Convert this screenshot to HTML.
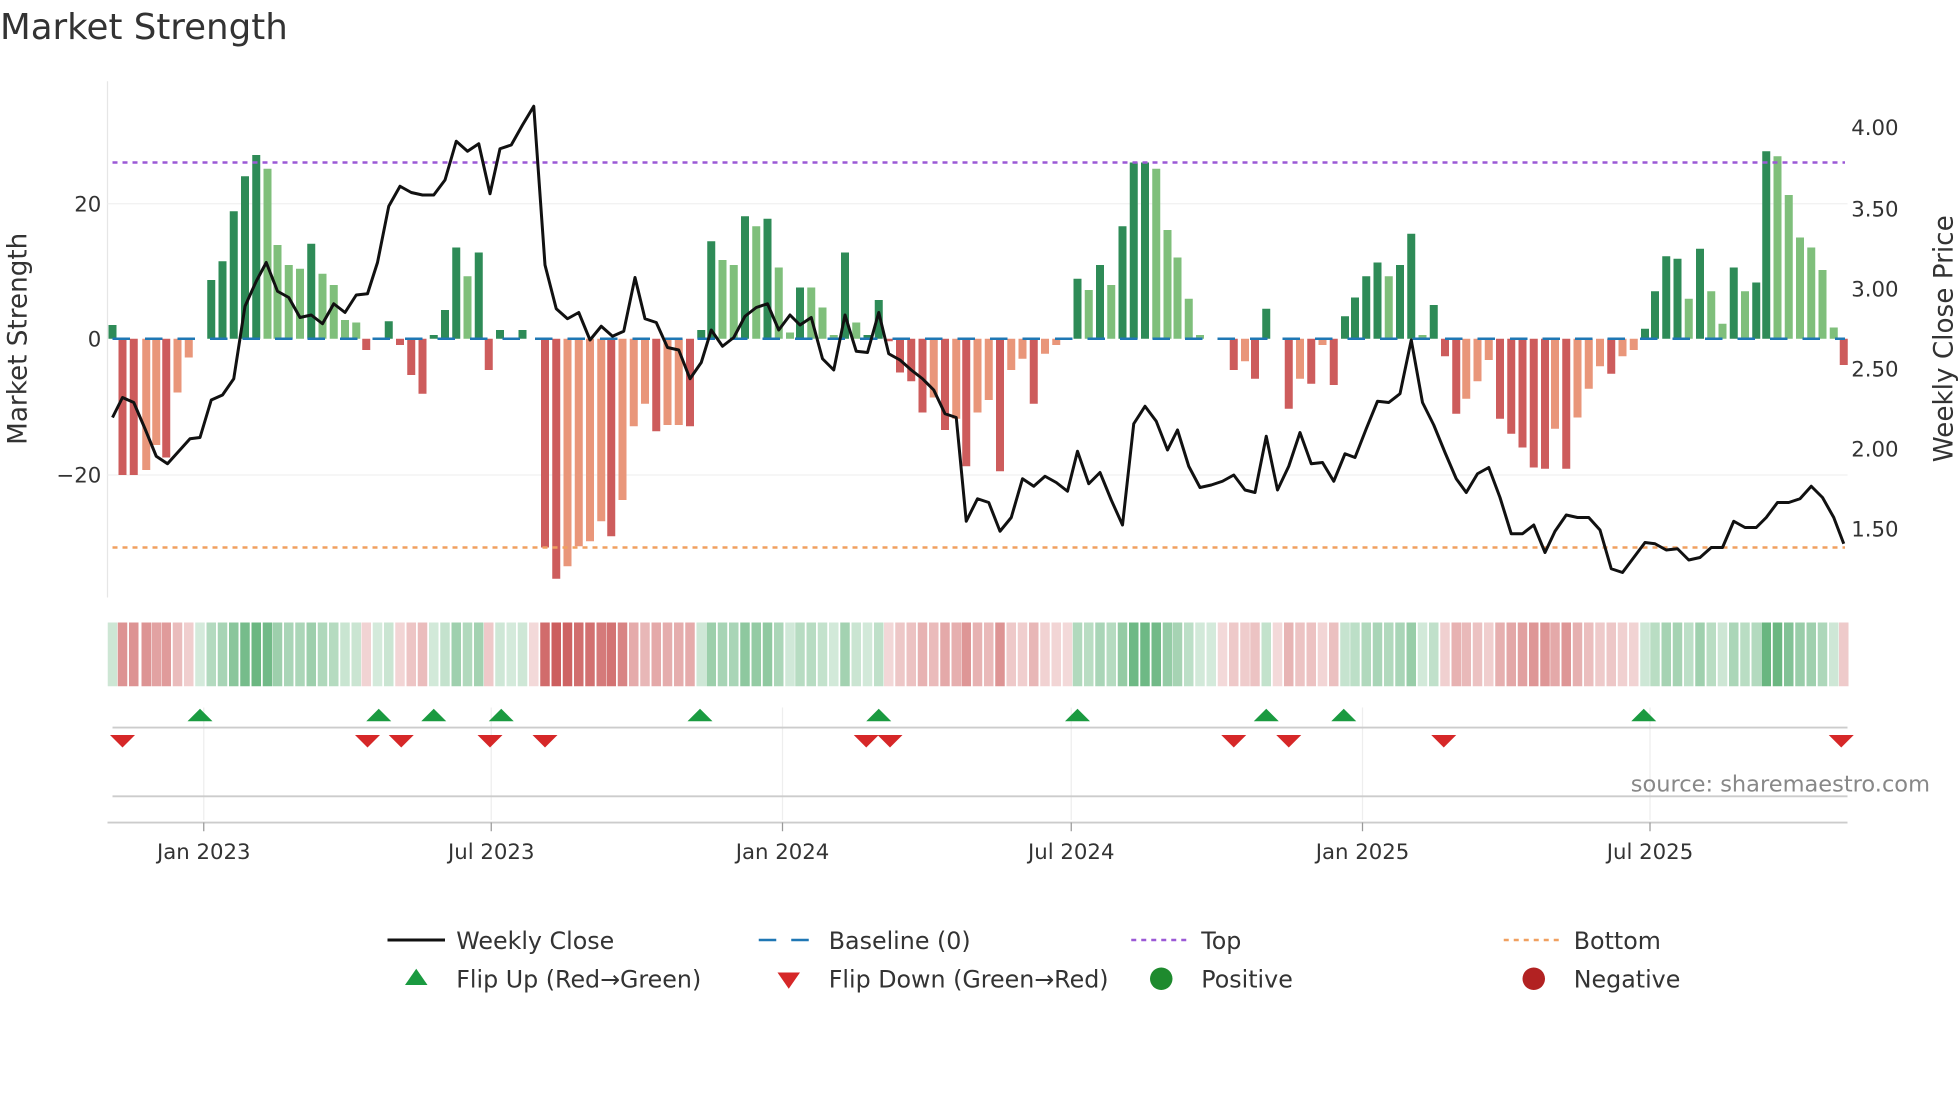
<!DOCTYPE html>
<html><head><meta charset="utf-8"><style>
html,body{margin:0;padding:0;background:#fff;width:1960px;height:1102px;overflow:hidden}
svg{display:block}
text{font-family:"DejaVu Sans","Liberation Sans",sans-serif}
</style></head><body>
<svg id="s" width="1960" height="1102" viewBox="0 0 1568 881.6" xmlns="http://www.w3.org/2000/svg">
<rect width="1568" height="882" fill="#fff"/>
<text x="0" y="31" font-size="28.5" fill="#333">Market Strength</text>
<line x1="86" y1="65" x2="86" y2="478" stroke="#e6e6e6"/>
<g stroke="#f0f0f0"><line x1="86" y1="163" x2="1478" y2="163"/><line x1="86" y1="380" x2="1478" y2="380"/></g>
<g font-size="17" fill="#333" text-anchor="end"><text x="81" y="169">20</text><text x="81" y="277">0</text><text x="81" y="386">−20</text></g>
<g font-size="17" fill="#333"><text x="1481" y="108">4.00</text><text x="1481" y="173">3.50</text><text x="1481" y="237">3.00</text><text x="1481" y="301">2.50</text><text x="1481" y="365">2.00</text><text x="1481" y="429">1.50</text></g>
<text transform="translate(21,271) rotate(-90)" font-size="21" fill="#333" text-anchor="middle">Market Strength</text>
<text transform="translate(1562,271) rotate(-90)" font-size="21" fill="#333" text-anchor="middle">Weekly Close Price</text>
<g id="bars"></g>
<line x1="90" y1="271" x2="1476" y2="271" stroke="#1f77b4" stroke-width="2" stroke-dasharray="14,12"/>
<line x1="90" y1="130" x2="1476" y2="130" stroke="#9b59d6" stroke-width="2" stroke-dasharray="4,4"/>
<line x1="90" y1="438" x2="1476" y2="438" stroke="#f0a060" stroke-width="2" stroke-dasharray="4,4"/>
<polyline id="price" fill="none" stroke="#111" stroke-width="2.4" stroke-linejoin="round"/>
<g id="heat"></g>
<g stroke="#eee"><line x1="163" y1="566" x2="163" y2="656"/><line x1="393" y1="566" x2="393" y2="656"/><line x1="626" y1="566" x2="626" y2="656"/><line x1="857" y1="566" x2="857" y2="656"/><line x1="1090" y1="566" x2="1090" y2="656"/><line x1="1320" y1="566" x2="1320" y2="656"/></g>
<line x1="90" y1="582" x2="1478" y2="582" stroke="#ccc" stroke-width="1.5"/>
<line x1="90" y1="637" x2="1478" y2="637" stroke="#ccc" stroke-width="1.5"/>
<line x1="86" y1="658" x2="1478" y2="658" stroke="#ccc" stroke-width="1.5"/>
<g id="marks"></g>
<text x="1544" y="633" font-size="18" fill="#888" text-anchor="end">source: sharemaestro.com</text>
<g stroke="#999"><line x1="163" y1="658" x2="163" y2="665"/><line x1="393" y1="658" x2="393" y2="665"/><line x1="626" y1="658" x2="626" y2="665"/><line x1="857" y1="658" x2="857" y2="665"/><line x1="1090" y1="658" x2="1090" y2="665"/><line x1="1320" y1="658" x2="1320" y2="665"/></g>
<g font-size="17" fill="#333" text-anchor="middle"><text x="163" y="687">Jan 2023</text><text x="393" y="687">Jul 2023</text><text x="626" y="687">Jan 2024</text><text x="857" y="687">Jul 2024</text><text x="1090" y="687">Jan 2025</text><text x="1320" y="687">Jul 2025</text></g>
<g font-size="19" fill="#333">
<line x1="310" y1="752" x2="356" y2="752" stroke="#111" stroke-width="2.4"/><text x="365" y="759">Weekly Close</text>
<line x1="607" y1="752" x2="653" y2="752" stroke="#1f77b4" stroke-width="2" stroke-dasharray="14,12"/><text x="663" y="759">Baseline (0)</text>
<line x1="905" y1="752" x2="951" y2="752" stroke="#9b59d6" stroke-width="2" stroke-dasharray="4,4"/><text x="961" y="759">Top</text>
<line x1="1203" y1="752" x2="1249" y2="752" stroke="#f0a060" stroke-width="2" stroke-dasharray="4,4"/><text x="1259" y="759">Bottom</text>
<polygon points="324,788 342,788 333,775" fill="#1a9a40"/><text x="365" y="790">Flip Up (Red→Green)</text>
<polygon points="622,778 640,778 631,791" fill="#d62728"/><text x="663" y="790">Flip Down (Green→Red)</text>
<circle cx="929" cy="783" r="9" fill="#1e8a2e"/><text x="961" y="790">Positive</text>
<circle cx="1227" cy="783" r="9" fill="#b22222"/><text x="1259" y="790">Negative</text>
</g>
</svg>
<script>
var D="90,260,G;98,380,R;107,380,R;117,376,S;125,356,S;133,366,R;142,314,S;151,286,S;160,272,G;169,224,G;178,209,G;187,169,G;196,141,G;205,124,G;214,135,L;222,196,L;231,212,L;240,215,L;249,195,G;258,219,L;267,228,L;276,256,L;285,258,L;293,280,R;302,271,G;311,257,G;320,276,R;329,300,R;338,315,R;347,268,G;356,248,G;365,198,G;374,221,L;383,202,G;391,296,R;400,264,G;409,270,G;418,264,G;427,272,R;436,438,R;445,463,R;454,453,S;463,437,S;472,433,S;481,417,S;489,429,R;498,400,S;507,341,S;516,323,S;525,345,R;534,340,S;543,340,S;552,341,R;561,264,G;569,193,G;578,208,L;587,212,L;596,173,G;605,181,L;614,175,G;623,214,L;632,266,L;640,230,G;649,230,L;658,246,L;667,268,L;676,202,G;685,258,L;694,268,G;703,240,G;711,273,R;720,298,R;729,305,R;738,330,R;747,318,S;756,344,R;765,335,S;773,373,R;782,330,S;791,320,S;800,377,R;809,296,S;818,287,S;827,323,R;836,283,S;845,276,S;854,272,S;862,223,G;871,232,L;880,212,G;889,228,L;898,181,G;907,130,G;916,130,G;925,135,L;934,184,L;942,206,L;951,239,L;960,268,L;969,270,L;978,272,S;987,296,R;996,289,S;1004,303,R;1013,247,G;1022,272,S;1031,327,R;1040,303,S;1049,307,R;1058,276,S;1067,308,R;1076,253,G;1084,238,G;1093,221,G;1102,210,G;1111,221,L;1120,212,G;1129,187,G;1138,268,L;1147,244,G;1156,285,R;1165,331,R;1173,319,S;1182,305,S;1191,288,S;1200,335,R;1209,347,R;1218,358,R;1227,374,R;1236,375,R;1244,343,S;1253,375,R;1262,334,S;1271,311,S;1280,293,S;1289,299,R;1298,285,S;1307,280,S;1316,263,G;1324,233,G;1333,205,G;1342,207,G;1351,239,L;1360,199,G;1369,233,L;1378,259,L;1387,214,G;1396,233,L;1405,226,G;1413,121,G;1422,125,L;1431,156,L;1440,190,L;1449,198,L;1458,216,L;1467,262,L;1475,292,R";
var C={G:"#2e8b57",L:"#7fbf7b",R:"#cd5c5c",S:"#e9967a"};
var b="",h="";
D.split(";").forEach(function(s){var p=s.split(","),x=+p[0],y=+p[1],c=p[2];
var top=Math.min(y,271),ht=Math.max(Math.abs(y-271),1);
if(Math.abs(y-271)>1)b+='<rect x="'+(x-3.2)+'" y="'+top+'" width="6.4" height="'+ht+'" fill="'+C[c]+'"/>';
var v=Math.min(Math.abs(y-271)/190,1),a=0.22+0.7*v;
var col=(c=="G"||c=="L"?"rgba(60,160,90,":"rgba(200,80,80,")+a.toFixed(2)+")";
h+='<rect x="'+(x-3.8)+'" y="498" width="7.6" height="51" fill="'+col+'"/>';});
document.getElementById("bars").innerHTML=b;document.getElementById("heat").innerHTML=h;
var P="90,334 98,318 107,322 116,343 125,365 134,371 143,361 152,351 160,350 169,320 178,316 187,303 196,245 205,225 213,210 222,233 231,238 240,254 249,252 258,259 267,243 276,250 285,236 294,235 302,210 311,165 320,149 329,154 338,156 347,156 356,144 365,113 374,121 383,115 392,155 400,119 409,116 418,100 427,85 436,212 445,247 454,255 463,250 472,272 481,261 490,269 499,265 508,222 516,255 525,258 534,278 543,280 552,303 561,290 569,264 578,277 587,270 596,253 605,246 614,243 623,264 632,252 640,260 649,254 658,287 667,296 676,252 685,281 694,282 703,250 711,283 720,288 729,296 738,303 747,312 756,331 765,334 773,417 782,399 791,402 800,425 809,414 818,383 827,389 836,381 845,386 854,393 862,361 871,387 880,378 889,400 898,420 907,339 916,325 925,337 934,360 942,344 951,373 960,390 969,388 978,385 987,380 996,392 1004,394 1013,349 1022,392 1031,373 1040,346 1049,371 1058,370 1067,385 1076,363 1084,366 1093,343 1102,321 1111,322 1120,315 1129,272 1138,322 1147,340 1156,362 1165,383 1173,394 1182,379 1191,374 1200,398 1209,427 1218,427 1227,420 1236,442 1244,425 1253,412 1262,414 1271,414 1280,424 1289,455 1298,458 1307,446 1316,434 1324,435 1333,440 1342,439 1351,448 1360,446 1369,438 1378,438 1387,417 1396,422 1405,422 1413,414 1422,402 1431,402 1440,399 1449,389 1458,398 1467,414 1475,435";
document.getElementById("price").setAttribute("points",P);
var m="";
[160,303,347,401,560,703,862,1013,1075,1315].forEach(function(x){m+='<polygon points="'+(x-10)+',577 '+(x+10)+',577 '+x+',567" fill="#1a9a40"/>';});
[98,294,321,392,436,693,712,987,1031,1155,1473].forEach(function(x){m+='<polygon points="'+(x-10)+',588 '+(x+10)+',588 '+x+',598" fill="#d62728"/>';});
document.getElementById("marks").innerHTML=m;
</script>
</body></html>
